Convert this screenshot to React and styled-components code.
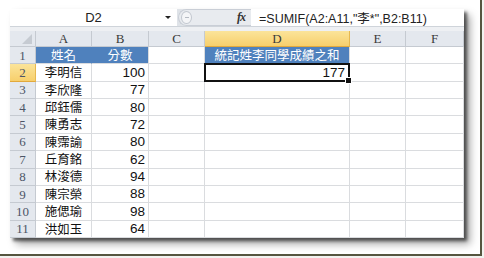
import React from 'react';
import styled, { createGlobalStyle } from 'styled-components';

const GlobalStyle = createGlobalStyle`
  html, body {
    margin: 0;
    padding: 0;
    background: #f2f2ef;
  }
`;

const Frame = styled.div`
  width: 482px;
  height: 256px;
  box-sizing: border-box;
  background: #ffffff;
  border-right: 2px solid #55553f;
  border-bottom: 2px solid #55553f;
  padding: 9px 0 0 10px;
`;

const Sheet = styled.div`
  width: 454px;
  height: 229px;
  display: flex;
  flex-direction: column;
  background: #ffffff;
  box-shadow: 3px 3px 3px rgba(0, 0, 0, 0.55), 6px 6px 8px rgba(0, 0, 0, 0.35);
  font-family: "Liberation Sans", Arial, sans-serif;
  overflow: hidden;
`;

const FormulaBar = styled.div`
  height: 17px;
  flex: none;
  display: flex;
  align-items: stretch;
  background: #dfe3e8;
`;

const NameBox = styled.div`
  width: 167px;
  position: relative;
  background: #ffffff;
  display: flex;
  align-items: center;
  justify-content: center;
  font-size: 13px;
  color: #222;
`;

const DropArrow = styled.span`
  position: absolute;
  right: 6px;
  top: 7px;
  border-left: 3px solid transparent;
  border-right: 3px solid transparent;
  border-top: 3px solid #222;
`;

const FxZone = styled.div`
  width: 73px;
  margin-left: 1px;
  display: flex;
  align-items: center;
  justify-content: space-between;
  padding: 0 6px 0 2px;
  box-sizing: border-box;
  background: #e8ebef;
  border-radius: 9px 0 0 9px;
  border: 1px solid #c9ced6;
  border-right: none;
`;

const Grip = styled.span`
  width: 9px;
  height: 11px;
  border-radius: 50%;
  border: 1px solid #c2c7cf;
  background: #f4f5f7;
  display: flex;
  align-items: center;
  justify-content: center;
  &::after {
    content: '';
    width: 4px;
    border-top: 1px solid #b5bac2;
  }
`;

const Fx = styled.span`
  font-family: "Liberation Serif", "Times New Roman", serif;
  font-style: italic;
  font-weight: bold;
  font-size: 12px;
  color: #333;
  letter-spacing: -1px;
`;

const FormulaInput = styled.div`
  flex: 1;
  background: #ffffff;
  display: flex;
  align-items: center;
  padding-left: 8px;
  font-size: 12.5px;
  color: #222;
  font-family: "Liberation Sans", "Noto Sans CJK TC", sans-serif;
`;

const Band = styled.div`
  height: 5px;
  flex: none;
  background: #eef0f3;
  border-top: 1px solid #cfd4da;
  box-sizing: border-box;
`;

const Grid = styled.div`
  flex: 1;
  min-height: 0;
  display: grid;
  grid-template-columns: 26px 56px 57px 56px 145px 56px 58px;
  grid-template-rows: 16px repeat(11, minmax(0, 1fr));
  line-height: 1;
`;

const Corner = styled.div`
  background: #e4e8ee;
  border-right: 1px solid #c5cad1;
  border-bottom: 1px solid #c5cad1;
  position: relative;
  &::after {
    content: '';
    position: absolute;
    right: 3px;
    bottom: 2px;
    border-left: 10px solid transparent;
    border-bottom: 10px solid #c6cbd2;
  }
`;

const ColHead = styled.div`
  display: flex;
  align-items: center;
  justify-content: center;
  font-family: "Liberation Serif", "Times New Roman", serif;
  font-size: 13px;
  color: #3a3a3a;
  background: ${p => (p.$active ? 'linear-gradient(#fbe49a, #f7cf6c)' : '#e4e8ee')};
  border-right: 1px solid ${p => (p.$active ? '#e7b850' : '#c5cad1')};
  border-bottom: 1px solid ${p => (p.$active ? '#e2a93c' : '#c5cad1')};
`;

const RowHead = styled(ColHead)`
  color: #4c5566;
  font-size: 13px;
`;

const Cell = styled.div`
  display: flex;
  align-items: center;
  justify-content: ${p => (p.$num ? 'flex-end' : 'center')};
  padding-right: ${p => (p.$num ? '3px' : '0')};
  font-family: ${p => (p.$num ? '"Liberation Sans", Arial' : '"Noto Sans CJK TC", "Noto Sans CJK SC"')}, sans-serif;
  font-size: ${p => (p.$num ? '13.5px' : '12.5px')};
  color: ${p => (p.$head ? '#ffffff' : '#111')};
  background: ${p => (p.$head ? '#4f81bd' : '#ffffff')};
  border-right: 1px solid ${p => (p.$head && !p.$edge ? '#4f81bd' : '#dadcdf')};
  border-bottom: 1px solid ${p => (p.$over ? '#9a7a4a' : '#dadcdf')};
  position: relative;
  overflow: visible;
  white-space: nowrap;
`;

const Selected = styled(Cell)`
  border: 2px solid #111;
  margin: -1px 0 0 -1px;
  &::after {
    content: '';
    position: absolute;
    right: -4px;
    bottom: -4px;
    width: 5px;
    height: 5px;
    background: #111;
    border: 1px solid #fff;
    z-index: 2;
  }
`;

const scores = [
  ['李明信', 100],
  ['李欣隆', 77],
  ['邱鈺儒', 80],
  ['陳勇志', 72],
  ['陳霈諭', 80],
  ['丘育銘', 62],
  ['林浚德', 94],
  ['陳宗榮', 88],
  ['施偲瑜', 98],
  ['洪如玉', 64],
];

const cols = ['A', 'B', 'C', 'D', 'E', 'F'];

export default function App() {
  return (
    <>
      <GlobalStyle />
      <Frame>
        <Sheet>
          <FormulaBar>
            <NameBox>
              D2
              <DropArrow />
            </NameBox>
            <FxZone>
              <Grip />
              <Fx>fx</Fx>
            </FxZone>
            <FormulaInput>=SUMIF(A2:A11,"李*",B2:B11)</FormulaInput>
          </FormulaBar>
          <Band />
          <Grid>
            <Corner />
            {cols.map(c => (
              <ColHead key={c} $active={c === 'D'}>{c}</ColHead>
            ))}

            <RowHead>1</RowHead>
            <Cell $head>姓名</Cell>
            <Cell $head $edge>分數</Cell>
            <Cell />
            <Cell $head $edge $over>統記姓李同學成績之和</Cell>
            <Cell />
            <Cell />

            {scores.map(([name, score], i) => (
              <React.Fragment key={name}>
                <RowHead $active={i === 0}>{i + 2}</RowHead>
                <Cell>{name}</Cell>
                <Cell $num>{score}</Cell>
                <Cell />
                {i === 0 ? <Selected $num>177</Selected> : <Cell />}
                <Cell />
                <Cell />
              </React.Fragment>
            ))}
          </Grid>
        </Sheet>
      </Frame>
    </>
  );
}
